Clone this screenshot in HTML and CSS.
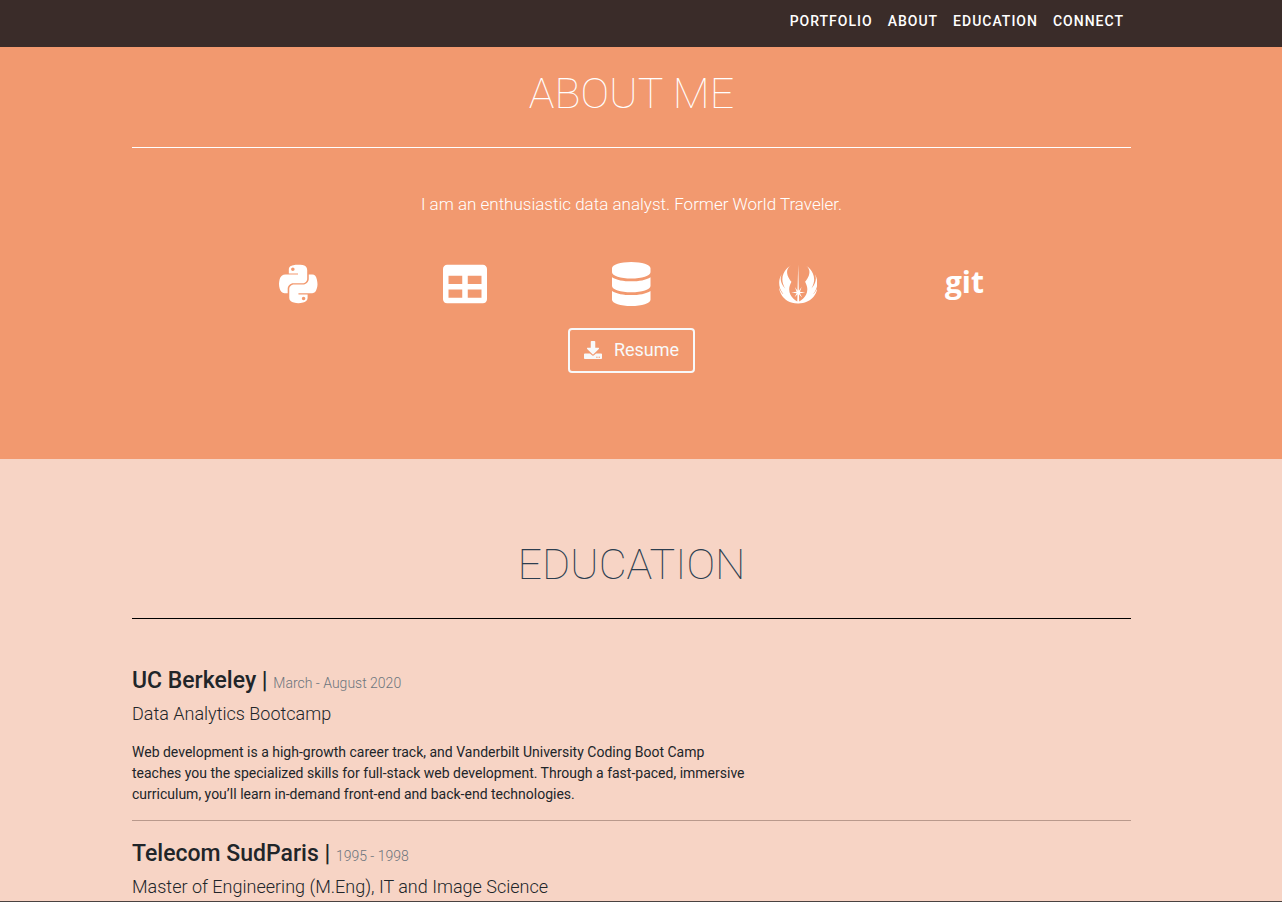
FILE: index.html
```html
<!DOCTYPE html>
<html lang="en">
<head>
<meta charset="utf-8">
<title>Portfolio</title>
<link rel="stylesheet" href="styles.css">
</head>
<body>
<header class="navbar">
  <nav class="nav-links">
    <a href="#portfolio">PORTFOLIO</a>
    <a href="#about">ABOUT</a>
    <a href="#education">EDUCATION</a>
    <a href="#connect">CONNECT</a>
  </nav>
</header>
<main>
<section class="about" id="about">
  <h1 class="title">ABOUT ME</h1>
  <p class="lead">I am an enthusiastic data analyst. Former World Traveler.</p>
  <ul class="skills">
    <li><svg class="icon" viewBox="0 0 448 512" role="img" aria-label="Python"><path d="M439.8 200.5c-7.7-30.9-22.3-54.2-53.4-54.2h-40.1v47.4c0 36.8-31.2 67.8-66.8 67.8H172.7c-29.2 0-53.4 25-53.4 54.3v101.8c0 29 25.2 46 53.4 54.3 33.8 9.9 66.3 11.7 106.8 0 26.9-7.8 53.4-23.5 53.4-54.3v-40.7H226.2v-13.6h160.2c31.1 0 42.6-21.7 53.4-54.2 11.2-33.5 10.7-65.7 0-108.6zM286.2 404c11.1 0 20.1 9.1 20.1 20.3 0 11.3-9 20.4-20.1 20.4-11 0-20.1-9.2-20.1-20.4.1-11.3 9.1-20.3 20.1-20.3zM167.8 248.1h106.8c29.7 0 53.4-24.5 53.4-54.3V91.9c0-29-24.4-50.7-53.4-55.6-35.8-5.9-74.7-5.6-106.8.1-45.2 8-53.4 24.7-53.4 55.6v40.7h106.9v13.6h-147c-31.1 0-58.3 18.7-66.8 54.2-9.8 40.7-10.2 66.1 0 108.6 7.6 31.6 25.7 54.2 56.8 54.2H101v-48.8c0-35.3 30.5-66.4 66.8-66.4zm-6.7-142.6c-11.1 0-20.1-9.1-20.1-20.3.1-11.3 9-20.4 20.1-20.4 11 0 20.1 9.2 20.1 20.4s-9 20.3-20.1 20.3z"/></svg></li>
    <li><svg class="icon" viewBox="0 0 512 512" role="img" aria-label="Tables"><path d="M464 32H48C21.49 32 0 53.49 0 80v352c0 26.51 21.49 48 48 48h416c26.51 0 48-21.49 48-48V80c0-26.51-21.49-48-48-48zM224 416H64v-96h160v96zm0-160H64v-96h160v96zm224 160H288v-96h160v96zm0-160H288v-96h160v96z"/></svg></li>
    <li><svg class="icon" viewBox="0 0 448 512" role="img" aria-label="Databases"><path d="M448 73.143v45.714C448 159.143 347.667 192 224 192S0 159.143 0 118.857V73.143C0 32.857 100.333 0 224 0s224 32.857 224 73.143zM448 176v102.857C448 319.143 347.667 352 224 352S0 319.143 0 278.857V176c48.125 33.143 136.208 48.572 224 48.572S399.874 209.143 448 176zm0 160v102.857C448 479.143 347.667 512 224 512S0 479.143 0 438.857V336c48.125 33.143 136.208 48.572 224 48.572S399.874 369.143 448 336z"/></svg></li>
    <li><svg class="icon" viewBox="0 0 448 512" role="img" aria-label="Jedi Order"><path d="M398.5 373.6c95.9-122.1 17.2-233.1 17.2-233.1 45.4 85.8-41.4 170.5-41.4 170.5 105-171.5-60.5-271.5-60.5-271.5 96.9 72.7-10.1 190.7-10.1 190.7 85.8 158.4-68.6 230.1-68.6 230.1s-.4-16.9-2.2-85.7c4.3 4.5 34.5 36.2 34.5 36.2l-24.2-47.4 62.6-9.1-62.6-9.1 20.2-55.5-31.4 45.9c-2.2-87.7-7.8-305.1-7.9-306.9v-2.4 1-1 2.4c0 1-5.6 219-7.9 306.9l-31.4-45.9 20.2 55.5-62.6 9.1 62.6 9.1-24.2 47.4 34.5-36.2c-1.8 68.8-2.2 85.7-2.2 85.7s-154.4-71.7-68.6-230.1c0 0-107-118.1-10.1-190.7 0 0-165.5 99.9-60.5 271.5 0 0-86.8-84.8-41.4-170.5 0 0-78.7 111 17.2 233.1 0 0-26.2-16.1-49.4-77.7 0 0 16.9 183.3 222 185.7h4.1c205-2.4 222-185.7 222-185.7-23.6 61.5-49.9 77.7-49.9 77.7z"/></svg></li>
    <li><span class="git">git</span></li>
  </ul>
  <button class="resume" type="button">
    <svg class="download" viewBox="0 0 512 512" aria-hidden="true"><path d="M216 0h80c13.3 0 24 10.7 24 24v168h87.7c17.8 0 26.7 21.5 14.1 34.1L269.7 378.3c-7.5 7.5-19.8 7.5-27.3 0L90.1 226.1c-12.6-12.6-3.7-34.1 14.1-34.1H192V24c0-13.3 10.7-24 24-24zm296 376v112c0 13.3-10.7 24-24 24H24c-13.3 0-24-10.7-24-24V376c0-13.3 10.7-24 24-24h146.7l49 49c20.1 20.1 52.5 20.1 72.6 0l49-49H488c13.3 0 24 10.7 24 24zm-124 88c0-11-9-20-20-20s-20 9-20 20 9 20 20 20 20-9 20-20zm64 0c0-11-9-20-20-20s-20 9-20 20 9 20 20 20 20-9 20-20z"/></svg>
    Resume
  </button>
</section>
<section class="education" id="education">
  <h2 class="title title-dark">EDUCATION</h2>
  <article class="school">
    <h3>UC Berkeley | <small>March - August 2020</small></h3>
    <h4>Data Analytics Bootcamp</h4>
    <p>Web development is a high-growth career track, and Vanderbilt University Coding Boot Camp<br>teaches you the specialized skills for full-stack web development. Through a fast-paced, immersive<br>curriculum, you’ll learn in-demand front-end and back-end technologies.</p>
  </article>
  <article class="school">
    <h3>Telecom SudParis | <small>1995 - 1998</small></h3>
    <h4>Master of Engineering (M.Eng), IT and Image Science</h4>
  </article>
</section>
</main>
<footer class="edge" id="connect"></footer>
</body>
</html>
```
FILE: styles.css
```css
* { box-sizing: border-box; }
body {
  margin: 0;
  font-family: Roboto, "Liberation Sans", sans-serif;
  font-size: 14px;
  line-height: 21px;
  color: #212529;
  background: #f7d4c5;
}
h1, h2, h3, h4, p, ul { margin: 0; padding: 0; }
.navbar {
  background: #3a2c29;
  padding: 11px 151px 15px 132px;
}
.nav-links {
  display: flex;
  justify-content: flex-end;
  gap: 15px;
  padding-right: 7px;
}
.nav-links a {
  color: #fff;
  font-weight: 500;
  letter-spacing: 1px;
  text-decoration: none;
}
.about, .education { padding: 0 151px 0 132px; }
.about {
  display: flex;
  flex-direction: column;
  background: #f2996f;
  color: #fff;
  padding-top: 20px;
  padding-bottom: 86px;
}
.title {
  padding-bottom: 28px;
  border-bottom: 1px solid #fff;
  font-size: 43px;
  line-height: 52px;
  font-weight: 100;
  text-align: center;
}
.title-dark {
  border-color: #000;
  color: #2c3e50;
}
.lead {
  margin-top: 43px;
  font-size: 17px;
  line-height: 26px;
  font-weight: 300;
  text-align: center;
}
.skills {
  display: grid;
  grid-template-columns: repeat(5, 1fr);
  width: 83.333%;
  margin: 45px auto 22px;
  list-style: none;
}
.skills li {
  display: flex;
  justify-content: center;
  align-items: center;
  height: 44px;
}
.icon { height: 44px; fill: currentColor; }
.git {
  font-family: "Open Sans", "Noto Sans", sans-serif;
  font-size: 30px;
  line-height: 40px;
  font-weight: 700;
  padding-bottom: 4px;
}
.resume {
  display: flex;
  align-self: center;
  align-items: center;
  gap: 12px;
  padding: 6px 14px 8px;
  border: 2px solid #f8f9fa;
  border-radius: 4px;
  background: transparent;
  color: #f8f9fa;
  font-family: inherit;
  font-size: 18px;
  line-height: 27px;
}
.download { width: 18px; height: 18px; fill: currentColor; }
.education {
  padding-top: 79px;
  padding-bottom: 3px;
}
.title + .school { margin-top: 48px; }
.school + .school {
  margin-top: 15px;
  padding-top: 19px;
  border-top: 1px solid #b9998c;
}
.school h3 {
  font-size: 23px;
  line-height: 28px;
  font-weight: 500;
}
.school small {
  font-size: 14px;
  font-weight: 300;
  color: #6c757d;
}
.school h4 {
  margin-top: 6px;
  font-size: 18px;
  line-height: 22px;
  font-weight: 300;
}
.school p { margin-top: 17px; }
.edge { height: 1px; background: #4a4240; }
```
